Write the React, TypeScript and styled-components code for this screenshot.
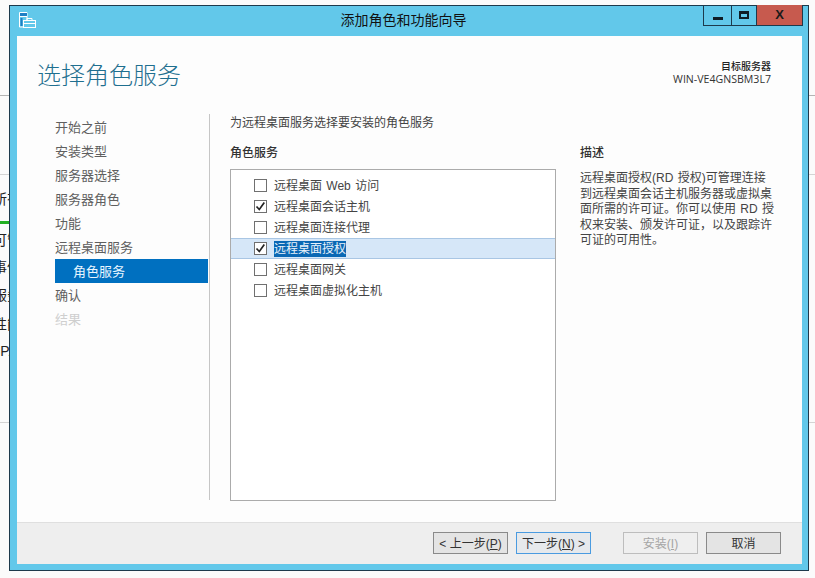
import styled, { createGlobalStyle } from 'styled-components';

const GlobalStyle = createGlobalStyle`
  html, body {
    margin: 0;
    padding: 0;
    width: 815px;
    height: 578px;
    overflow: hidden;
    background: #fbfbfb;
  }
  body {
    font-family: "Liberation Sans", "Noto Sans CJK SC", sans-serif;
  }
`;

const STEPS = ['开始之前', '安装类型', '服务器选择', '服务器角色', '功能', '远程桌面服务'];

const SERVICES = [
  { label: '远程桌面 Web 访问', checked: false },
  { label: '远程桌面会话主机', checked: true },
  { label: '远程桌面连接代理', checked: false },
  { label: '远程桌面授权', checked: true, selected: true },
  { label: '远程桌面网关', checked: false },
  { label: '远程桌面虚拟化主机', checked: false },
];

function AppIcon() {
  return (
    <svg width="17" height="16" viewBox="0 0 17 16" fill="none">
      <path d="M0.5 0.5h7.5v14.5h-7.5z" stroke="#fff" fill="#62c8ea" />
      <rect x="1" y="1" width="7" height="3.5" fill="#1f7fc4" />
      <path d="M1 4.5h7" stroke="#fff" />
      <rect x="1.5" y="6" width="2" height="8" fill="#1f7fc4" />
      <rect x="4.5" y="8.5" width="12" height="7" fill="#62c8ea" stroke="#fff" />
      <path d="M8 8.5v-2h5v2M4.5 11.5h12" stroke="#fff" />
    </svg>
  );
}

function Check() {
  return (
    <svg width="13" height="13" viewBox="0 0 13 13" fill="none">
      <path d="M2.5 6.5l2.8 3 5-7" stroke="#222" strokeWidth="1.7" />
    </svg>
  );
}

export default function App() {
  return (
    <Page>
      <GlobalStyle />
      <Backdrop>
        <BackLine $top={95} />
        <BackLine $top={174} $short />
        <BackText $top={189}>所有</BackText>
        <GreenBar />
        <BackText $top={230}>可管</BackText>
        <BackText $top={257}>事件</BackText>
        <BackText $top={285}>服务</BackText>
        <BackText $top={314}>性能</BackText>
        <BackCode $top={341}>BPA</BackCode>
        <BackLine $top={422} $short />
      </Backdrop>
      <Window>
        <TitleBar>
          <TitleIcon>
            <AppIcon />
          </TitleIcon>
          <Title>添加角色和功能向导</Title>
          <Controls>
            <Control>
              <MinGlyph />
            </Control>
            <MaxControl>
              <MaxGlyph />
            </MaxControl>
            <CloseControl>X</CloseControl>
          </Controls>
        </TitleBar>
        <Client>
          <Header>
            <Heading>选择角色服务</Heading>
            <Target>
              <TargetLabel>目标服务器</TargetLabel>
              <TargetName>WIN-VE4GNSBM3L7</TargetName>
            </Target>
          </Header>
          <Body>
            <Nav>
              {STEPS.map((s) => (
                <NavItem key={s}>{s}</NavItem>
              ))}
              <NavActive>角色服务</NavActive>
              <NavItem>确认</NavItem>
              <NavDisabled>结果</NavDisabled>
            </Nav>
            <Content>
              <Intro>为远程桌面服务选择要安装的角色服务</Intro>
              <Columns>
                <ListColumn>
                  <SectionTitle>角色服务</SectionTitle>
                  <ListBox>
                    {SERVICES.map((s) => (
                      <Row key={s.label} $selected={s.selected}>
                        <CheckBox>{s.checked && <Check />}</CheckBox>
                        <RowLabel $selected={s.selected}>{s.label}</RowLabel>
                      </Row>
                    ))}
                  </ListBox>
                </ListColumn>
                <DescColumn>
                  <SectionTitle>描述</SectionTitle>
                  <DescText>
                    远程桌面授权(RD 授权)可管理连接
                    <br />
                    到远程桌面会话主机服务器或虚拟桌
                    <br />
                    面所需的许可证。你可以使用 RD 授
                    <br />
                    权来安装、颁发许可证，以及跟踪许
                    <br />
                    可证的可用性。
                  </DescText>
                </DescColumn>
              </Columns>
            </Content>
          </Body>
          <Footer>
            <Button>
              &lt; 上一步(<u>P</u>)
            </Button>
            <NextButton>
              下一步(<u>N</u>) &gt;
            </NextButton>
            <InstallButton>
              安装(<u>I</u>)
            </InstallButton>
            <Button>取消</Button>
          </Footer>
        </Client>
      </Window>
    </Page>
  );
}

const Page = styled.div`
  position: relative;
  width: 815px;
  height: 578px;
  padding: 5px 0 0 9px;
  box-sizing: border-box;
  overflow: hidden;
`;

/* the server manager page that lies under the wizard */
const Backdrop = styled.div`
  position: absolute;
  inset: 0;
`;

const BackLine = styled.div<{ $top: number; $short?: boolean }>`
  position: absolute;
  left: 0;
  top: ${(p) => p.$top}px;
  width: 100%;
  height: 1px;
  background: ${(p) => (p.$short ? '#d4d4d4' : '#b4b4b4')};
`;

const GreenBar = styled.div`
  position: absolute;
  left: 0;
  top: 221px;
  width: 20px;
  height: 3px;
  background: #22b022;
`;

const BackText = styled.div<{ $top: number }>`
  position: absolute;
  left: -7px;
  top: ${(p) => p.$top}px;
  font-size: 14px;
  line-height: 20px;
  color: #222;
  white-space: nowrap;
`;

const BackCode = styled(BackText)`
  left: -9px;
`;

const Window = styled.div`
  position: relative;
  width: 800px;
  height: 566px;
  box-sizing: border-box;
  border: 1px solid #1d3a4c;
  background: #62c8ea;
  padding: 0 6px 6px 7px;
  display: flex;
  flex-direction: column;
`;

const TitleBar = styled.div`
  height: 30px;
  position: relative;
  display: flex;
  align-items: center;
  justify-content: center;
  flex-shrink: 0;
`;

const TitleIcon = styled.div`
  position: absolute;
  left: 2px;
  top: 6px;
  width: 17px;
  height: 16px;
`;

const Title = styled.div`
  font-size: 14px;
  color: #111;
  padding: 0 12px 4px 0;
`;

const Controls = styled.div`
  position: absolute;
  right: -1px;
  top: -1px;
  display: flex;
  height: 21px;
  border: 1px solid #1d3a4c;
  border-top: none;
  box-sizing: border-box;
`;

const Control = styled.div`
  width: 27px;
  display: flex;
  align-items: center;
  justify-content: center;
  border-right: 1px solid #1d3a4c;
`;

const MaxControl = styled(Control)`
  width: 24px;
`;

const CloseControl = styled.div`
  width: 45px;
  background: #c75a4e;
  color: #1a1a1a;
  font: bold 13px "Liberation Sans", sans-serif;
  text-align: center;
  line-height: 20px;
`;

const MinGlyph = styled.div`
  width: 10px;
  height: 3px;
  background: #0f1d26;
  margin-top: 6px;
`;

const MaxGlyph = styled.div`
  width: 10px;
  height: 8px;
  box-sizing: border-box;
  border: 2px solid #0f1d26;
  border-top-width: 3px;
`;

const Client = styled.div`
  flex: 1;
  background: #fdfdfd;
  display: flex;
  flex-direction: column;
  min-height: 0;
`;

const Header = styled.div`
  height: 77px;
  display: flex;
  justify-content: space-between;
  flex-shrink: 0;
  padding: 0 31px 0 20px;
`;

const Heading = styled.div`
  font-size: 24px;
  line-height: 32px;
  color: #1f6f8f;
  font-weight: 300;
  margin-top: 24px;
`;

const Target = styled.div`
  margin-top: 24px;
  text-align: right;
  color: #222;
`;

const TargetLabel = styled.div`
  font-size: 10px;
  line-height: 13px;
  font-weight: 500;
`;

const TargetName = styled.div`
  font: 10.6px/12px "Open Sans", "Liberation Sans", sans-serif;
  color: #333;
`;

const Body = styled.div`
  flex: 1;
  display: flex;
  min-height: 0;
`;

const Nav = styled.div`
  width: 193px;
  height: 386px;
  box-sizing: border-box;
  padding: 1px 0 0 38px;
  flex-shrink: 0;
  border-right: 1px solid #c6c6c6;
  margin-top: 1px;
`;

const NavItem = styled.div`
  height: 24px;
  line-height: 26px;
  font-size: 13px;
  color: #5f5f5f;
`;

const NavActive = styled(NavItem)`
  width: 153px;
  background: #0070c0;
  color: #e8f6ff;
  padding-left: 18px;
  box-sizing: border-box;
`;

const NavDisabled = styled(NavItem)`
  color: #cfcfcf;
`;

const Content = styled.div`
  flex: 1;
  padding: 2px 0 0 20px;
`;

const Intro = styled.div`
  font-size: 12px;
  line-height: 16px;
  color: #444;
`;

const Columns = styled.div`
  display: flex;
  margin-top: 14px;
`;

const ListColumn = styled.div`
  width: 326px;
`;

const SectionTitle = styled.div`
  font-size: 12px;
  line-height: 16px;
  font-weight: 500;
  color: #333;
`;

const ListBox = styled.div`
  margin-top: 8px;
  width: 326px;
  height: 332px;
  box-sizing: border-box;
  border: 1px solid #ababab;
  background: #fff;
  padding-top: 5px;
`;

const Row = styled.div<{ $selected?: boolean }>`
  height: 21px;
  box-sizing: border-box;
  display: flex;
  align-items: center;
  padding-left: 23px;
  background: ${(p) => (p.$selected ? '#d6e7f8' : 'transparent')};
  border: 1px solid ${(p) => (p.$selected ? '#a9c6e4' : 'transparent')};
  border-left: none;
  border-right: none;
`;

const CheckBox = styled.div`
  width: 13px;
  height: 13px;
  box-sizing: border-box;
  border: 1px solid #707070;
  background: #fff;
  display: flex;
  align-items: center;
  justify-content: center;
  flex-shrink: 0;
  & > svg {
    flex-shrink: 0;
  }
`;

const RowLabel = styled.span<{ $selected?: boolean }>`
  margin-left: 7px;
  font-size: 12px;
  line-height: 16px;
  word-spacing: 1px;
  color: ${(p) => (p.$selected ? '#e8f2fb' : '#444')};
  background: ${(p) => (p.$selected ? '#0a68b4' : 'transparent')};
`;

const DescColumn = styled.div`
  margin-left: 24px;
  width: 200px;
`;

const DescText = styled.div`
  margin-top: 10px;
  font-size: 12px;
  line-height: 15.6px;
  word-spacing: 1px;
  color: #444;
  white-space: nowrap;
`;

const Footer = styled.div`
  height: 42px;
  box-sizing: border-box;
  border-top: 1px solid #dfdfdf;
  background: #eeeeee;
  display: flex;
  align-items: flex-start;
  padding: 9px 20px 0 416px;
  flex-shrink: 0;
`;

const Button = styled.button`
  width: 75px;
  height: 22px;
  box-sizing: border-box;
  border: 1px solid #8a8a8a;
  background: #e4e4e4;
  font: 12px/18px "Liberation Sans", "Noto Sans CJK SC", sans-serif;
  color: #333;
  padding: 2px 0 0;
  margin-right: 8px;
  &:last-child {
    margin-right: 0;
  }
`;

const NextButton = styled(Button)`
  border-color: #4a9be0;
  background: #e6e9ec;
  margin-right: 32px;
`;

const InstallButton = styled(Button)`
  border-color: #bdbdbd;
  background: #efefef;
  color: #a5a5a5;
  margin-right: 8px;
`;
